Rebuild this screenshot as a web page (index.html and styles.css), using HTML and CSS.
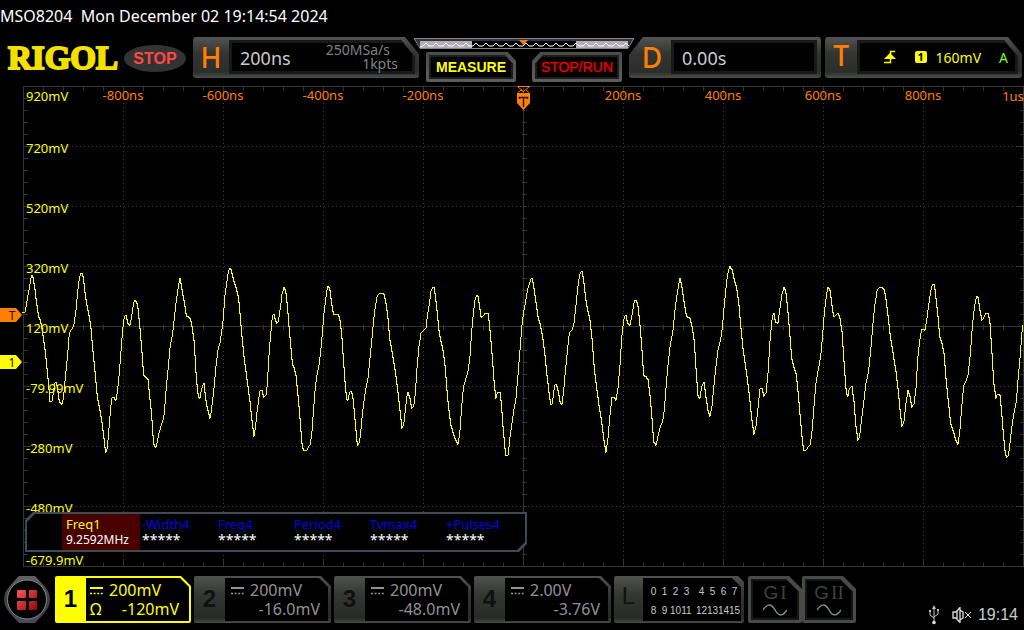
FILE: index.html
```html
<!DOCTYPE html>
<html lang="en">
<head>
<meta charset="utf-8">
<title>MSO8204</title>
<link rel="stylesheet" href="styles.css">
</head>
<body>
<div class="caption">MSO8204&nbsp; Mon December 02 19:14:54 2024</div>

<header class="topbar">
  <div class="brand">RIGOL</div>
  <div class="run-state">STOP</div>
  <button class="panel panel-h cut-right">
    <span class="letter">H</span>
    <span class="screen"><span class="value">200ns</span><span class="sampling"><span>250MSa/s</span><span class="depth">1kpts</span></span></span>
  </button>
  <div class="middle">
    <svg class="memory" viewBox="0 0 220 12" aria-hidden="true">
      <path d="M0 0H220L215 12H5Z" fill="#000"/>
      <path d="M0 1H220L213 10V3H6V10Z" fill="#34343c"/>
      <path d="M6 3H58V11H6ZM162 3H214V11H162Z" fill="#b4b0b8"/>
      <path class="memory-wave" d="M6 9"/>
      <path d="M0 .5H220M.5 1L6 10.500H214L219.500 1" fill="none" stroke="#85858c"/>
      <path d="M105 2H114L109.500 7Z" fill="#ff8000"/>
    </svg>
    <div class="actions">
      <button class="action measure"><span>MEASURE</span></button>
      <button class="action stoprun"><span>STOP/RUN</span></button>
    </div>
  </div>
  <button class="panel panel-d cut-left">
    <span class="letter">D</span>
    <span class="screen"><span class="value">0.00s</span></span>
  </button>
  <button class="panel panel-t cut-right">
    <span class="letter">T</span>
    <span class="screen trigger">
      <svg class="edge" viewBox="0 0 12 14" aria-hidden="true"><path d="M0 12.500H6.500V1.500H11" fill="none" stroke="#ff0" stroke-width="1.500"/><path d="M0 9L6 3L12 9Z" fill="#ff0"/></svg>
      <span class="source">1</span><span class="level">160mV</span><span class="sweep">A</span>
    </span>
  </button>
</header>

<main class="plot">
  <svg class="graph" viewBox="0 0 1024 482" role="img" aria-label="Channel 1 waveform">
    <g class="grid" id="grid"></g>
    <g class="volts">
      <text x="26" y="15">920mV</text><text x="26" y="67">720mV</text><text x="26" y="127">520mV</text>
      <text x="26" y="187">320mV</text><text x="26" y="247">120mV</text><text x="26" y="307">-79.99mV</text>
      <text x="26" y="367">-280mV</text><text x="26" y="427">-480mV</text><text x="26" y="479">-679.9mV</text>
    </g>
    <g class="times">
      <text x="123" y="14">-800ns</text><text x="223" y="14">-600ns</text><text x="323" y="14">-400ns</text><text x="423" y="14">-200ns</text>
      <text x="623" y="14">200ns</text><text x="723" y="14">400ns</text><text x="823" y="14">600ns</text><text x="923" y="14">800ns</text>
      <text x="1013" y="15">1us</text>
    </g>
    <g transform="translate(0 169) scale(.333333)" class="trace">
      <polyline points="70,172 76,172 82,132 88,100 92,75 95,62 98,62 101,82 104,95 107,122 112,160 116,185 121,196 125,214 130,250 136,290 140,330 145,380 149,425 149,440 156,440 159,420 164,385 168,382 173,400 176,430 180,442 186,448 190,432 195,380 200,330 205,275 208,235 212,228 217,224 222,208 228,165 233,110 238,72 242,57 247,54 251,75 256,120 261,150 267,180 273,220 279,290 287,370 292,425 300,465 307,510 313,560 317,592 320,590 323,568 327,520 332,460 335,430 342,428 348,436 353,405 358,355 363,290 368,225 372,192 377,179 381,192 385,209 390,211 394,190 398,165 401,145 406,136 410,140 414,160 419,210 425,280 431,362 438,366 444,374 449,425 455,480 459,540 462,568 467,580 471,565 476,540 482,518 488,500 493,475 498,410 504,345 510,280 518,235 524,180 530,130 535,95 540,70 544,90 549,120 555,155 559,182 566,186 571,190 576,215 583,265 587,340 592,400 596,428 600,430 604,405 612,385 616,420 620,450 626,475 630,490 634,470 638,435 643,390 648,335 654,285 660,265 665,230 670,190 674,130 680,85 685,50 690,40 694,45 698,65 704,85 710,105 716,130 720,175 726,245 732,305 738,350 744,395 750,440"/>
      <polyline transform="translate(750 0)" points="0,440 5,490 12,544 16,522 20,480 26,435 30,408 36,407 42,427 48,420 52,390 56,315 61,250 66,195 71,173 76,195 80,206 85,203 88,180 92,155 96,118 102,98 107,108 112,150 117,215 122,270 127,325 133,340 138,360 143,410 148,465 152,515 155,560 160,585 172,585 176,575 181,570 186,530 191,460 196,395 202,355 208,325 214,270 219,210 223,165 229,120 233,95 239,100 243,130 249,170 251,178 265,178 270,195 275,235 280,310 285,380 289,425 293,442 298,415 303,409 308,420 312,460 317,515 322,572 326,570 331,545 335,500 341,445 348,400 354,370 360,310 366,250 371,195 376,155 382,122 388,116 402,117 408,145 414,190 419,250 426,290 433,330 440,380 446,430 452,485 456,520 461,510 466,465 470,430 474,412 480,430 485,460 491,458 496,415 501,340 507,275 513,235 520,228 528,220 532,185 538,150 543,110 548,98 553,98 557,130 562,175 568,235 573,260 580,290 586,340 592,420 598,475 603,510 610,535 617,555 624,568 629,540 634,470 640,400 648,370 654,350 660,305 665,230 670,175 675,135 680,121 684,125 688,150 694,190 700,185 706,175 714,175 718,205 723,260 728,320 733,390 738,430 743,412 750,412"/>
      <polyline transform="translate(1500 0)" points="0,412 4,445 9,515 14,570 17,600 25,600 29,555 34,520 41,470 48,430 54,360 60,285 65,220 71,170 77,140 83,105 89,85 95,68 98,75 103,108 109,150 114,185 121,210 128,245 135,300 142,370 148,420 152,448 157,448 161,412 165,392 169,386 174,405 180,440 186,448 191,410 196,350 202,290 208,235 217,226 222,205 228,150 233,100 239,60 246,49 251,75 257,130 263,165 270,195 276,250 283,340 290,400 297,450 305,500 311,550 318,592 324,550 330,480 336,428 343,428 348,436 354,400 360,330 365,250 371,195 377,178 383,205 390,212 396,180 402,145 407,133 413,145 419,200 425,270 431,362 438,364 444,374 450,420 456,490 461,560 468,572 474,545 481,518 488,500 493,465 498,400 504,330 511,270 518,235 524,175 531,120 536,90 540,70 545,90 550,125 556,165 560,185 570,190 577,220 583,260 588,340 594,422 600,430 605,395 612,382 617,420 624,465 630,485 636,455 642,390 648,335 654,285 661,260 667,220 673,150 680,80 685,48 690,35 697,45 703,75 710,100 716,140 722,210 729,280 736,330 743,380 750,438"/>
      <polyline transform="translate(2250 0)" points="0,438 5,490 12,538 18,515 24,460 30,402 36,400 42,424 48,415 54,355 60,260 66,195 71,170 76,200 84,205 90,160 96,118 102,98 107,108 112,150 118,220 125,310 133,340 139,360 145,420 152,500 158,565 161,586 170,586 175,575 181,570 187,520 193,440 198,385 205,345 212,305 218,240 223,175 229,125 234,97 240,105 246,150 251,185 259,182 264,175 270,190 276,230 282,320 288,400 293,430 298,402 306,395 312,440 318,515 324,555 329,545 334,500 341,445 348,385 355,355 362,290 368,215 374,155 381,110 387,99 396,98 403,104 409,140 415,190 421,245 430,300 438,350 445,410 451,475 456,514 462,500 468,445 474,407 480,425 486,457 492,448 498,400 503,315 509,260 515,224 525,225 531,190 537,145 543,105 548,88 553,88 558,130 564,185 569,245 575,262 582,295 588,370 595,440 602,505 610,530 617,553 624,568 629,535 635,460 641,395 648,380 654,362 661,300 667,215 673,160 680,124 684,126 690,165 696,195 701,190 707,176 715,176 720,205 725,280 731,380 738,430 743,418 750,420 755,470 760,535 765,585 769,607 775,605 779,575 785,520 792,475 799,440 804,375 811,300 815,240 819,210"/>
    </g>
    <g class="markers">
      <path d="M0 222H16L22 229L16 236H0Z" fill="#ff8000"/>
      <text x="12" y="234">T</text>
      <path d="M0 269H16L22 276L16 283H0Z" fill="#ff0"/>
      <text x="12" y="281">1</text>
      <path d="M517.500 .5H529.500L523.500 5.500ZM518 6.500L521 4L524 6M526 4L529 6.500" fill="none" stroke="#ff8000"/>
      <path d="M517 7H530V17L523.500 24L517 17Z" fill="#ff8000"/>
      <path d="M519.500 13V11.500H527.500V13M523.500 11.500V21" fill="none" stroke="#2a1800" stroke-width="1.500"/>
    </g>
  </svg>
  <section class="measures">
    <div class="measures-inner">
      <div class="item active"><b>Freq1</b><span>9.2592MHz</span></div>
      <div class="item"><b>-Width4</b><span>*****</span></div>
      <div class="item"><b>Freq4</b><span>*****</span></div>
      <div class="item"><b>Period4</b><span>*****</span></div>
      <div class="item"><b>Tvmax4</b><span>*****</span></div>
      <div class="item"><b>+Pulses4</b><span>*****</span></div>
    </div>
  </section>
</main>

<footer class="bottombar">
  <button class="menu" aria-label="Menu">
    <svg viewBox="0 0 46 47" aria-hidden="true">
      <defs>
        <linearGradient id="ring" x1="0" y1="0" x2="0" y2="1"><stop offset="0" stop-color="#626262"/><stop offset=".5" stop-color="#3c3d40"/><stop offset="1" stop-color="#4a4b5a"/></linearGradient>
        <linearGradient id="red" gradientUnits="userSpaceOnUse" x1="13" y1="14" x2="33" y2="34"><stop offset="0" stop-color="#ff5555"/><stop offset="1" stop-color="#900808"/></linearGradient>
      </defs>
      <path d="M15 0H31Q36 5 41 11Q46 17 46 23.500Q46 30 41 36Q36 42 31 47H15Q10 42 5 36Q0 30 0 23.500Q0 17 5 11Q10 5 15 0Z" fill="url(#ring)"/>
      <circle cx="23" cy="23.500" r="19.500" fill="#000" stroke="#85878c"/>
      <g fill="url(#red)"><rect x="13" y="14" width="9" height="8" rx="1"/><rect x="25" y="14" width="8" height="8" rx="1"/><rect x="13" y="25" width="9" height="9" rx="1"/><rect x="25" y="25" width="8" height="9" rx="1"/></g>
    </svg>
  </button>
  <button class="channel on">
    <span class="number">1</span>
    <span class="readout">
      <span class="line"><svg class="dc" viewBox="0 0 13 8"><path d="M0 1H13" stroke-width="2"/><path d="M0 6.500H13" stroke-dasharray="2 1.600" stroke-width="1.500"/></svg>200mV</span>
      <span class="line offset"><span class="ohm">Ω</span>-120mV</span>
    </span>
  </button>
  <button class="channel">
    <span class="number">2</span>
    <span class="readout">
      <span class="line"><svg class="dc" viewBox="0 0 13 8"><path d="M0 1H13" stroke-width="2"/><path d="M0 6.500H13" stroke-dasharray="2 1.600" stroke-width="1.500"/></svg>200mV</span>
      <span class="line offset">-16.0mV</span>
    </span>
  </button>
  <button class="channel">
    <span class="number">3</span>
    <span class="readout">
      <span class="line"><svg class="dc" viewBox="0 0 13 8"><path d="M0 1H13" stroke-width="2"/><path d="M0 6.500H13" stroke-dasharray="2 1.600" stroke-width="1.500"/></svg>200mV</span>
      <span class="line offset">-48.0mV</span>
    </span>
  </button>
  <button class="channel">
    <span class="number">4</span>
    <span class="readout">
      <span class="line"><svg class="dc" viewBox="0 0 13 8"><path d="M0 1H13" stroke-width="2"/><path d="M0 6.500H13" stroke-dasharray="2 1.600" stroke-width="1.500"/></svg>2.00V</span>
      <span class="line offset">-3.76V</span>
    </span>
  </button>
  <button class="channel logic">
    <span class="number">L</span>
    <span class="readout bits">
      <span>0</span><span>1</span><span>2</span><span>3</span><i></i><span>4</span><span>5</span><span>6</span><span>7</span>
      <span>8</span><span>9</span><span>10</span><span>11</span><i></i><span>12</span><span>13</span><span>14</span><span>15</span>
    </span>
  </button>
  <div class="generators">
    <button class="generator"><span class="face"><span class="name">G<span class="roman">I</span></span><svg class="sine" viewBox="0 0 24 12"><path d="M0 6C4 0 8 -1 12 6S20 12 24 6"/></svg></span></button>
    <button class="generator"><span class="face"><span class="name">G<span class="roman">II</span></span><svg class="sine" viewBox="0 0 24 12"><path d="M0 6C4 0 8 -1 12 6S20 12 24 6"/></svg></span></button>
  </div>
  <div class="status">
    <svg class="usb" viewBox="0 0 10 20" aria-label="USB"><path d="M5 2V17M1 6V10L5 13M9 5V9L5 12" fill="none" stroke="#c4c4c4"/><path d="M5 0L7 4H3Z" fill="#c4c4c4"/><path d="M0 5H2V7H0ZM8 4H10V6H8Z" fill="#c4c4c4"/><circle cx="5" cy="17.500" r="1.800" fill="#ddd"/></svg>
    <svg class="speaker" viewBox="0 0 20 16" aria-label="Muted"><path d="M1 5H4L8 .5V15.500L4 11H1ZM5 4V12M8 3L11 5V11L8 13M8 6V10" fill="none" stroke="#ddd" stroke-width="1.300"/><path d="M13 5L19 11M19 5L13 11" stroke="#ddd"/></svg>
    <span class="clock">19:14</span>
  </div>
</footer>
<script src="grid.js"></script>
</body>
</html>
```
FILE: styles.css
```css
* { box-sizing: border-box; }

body {
  margin: 0;
  min-height: 100vh;
  background: #000;
  color: #ccc;
  font-family: "Noto Sans", "Open Sans", sans-serif;
}

button {
  margin: 0;
  padding: 0;
  border: 0;
  background: none;
  color: inherit;
  font: inherit;
  text-align: left;
}

svg { display: block; }

.caption {
  padding: 4px 0 9px;
  color: #fff;
  font-size: 16px;
  line-height: 24px;
}

/* Top bar */
.topbar {
  display: flex;
  align-items: flex-start;
  height: 49px;
  padding: 0 2px 0 8px;
}

.brand {
  flex: none;
  width: 116px;
  color: #f2e000;
  font-family: "Liberation Serif", serif;
  font-size: 33px;
  font-weight: bold;
  line-height: 43px;
  -webkit-text-stroke: 2px #f2e000;
}

.run-state {
  flex: none;
  width: 62px;
  height: 27px;
  margin: 8px 7px 0 0;
  border-radius: 50%;
  background: #333;
  color: #ff4848;
  font: bold 16px/28px "Liberation Sans", sans-serif;
  text-align: center;
}

.panel {
  display: flex;
  height: 41px;
  padding: 3px 4px 4px 0;
  border-radius: 3px;
  background: linear-gradient(#525452, #333533 40%, #2c2e2c 85%, #4c4e4c);
}

.panel-h { flex: 1 1 226px; }
.panel-d { flex: 1 1 192px; }
.panel-t { flex: 1 1 197px; margin-left: 4px; }

.cut-right,
.cut-right .screen {
  clip-path: polygon(0 0, calc(100% - 14px) 0, 100% 17px, 100% 100%, 0 100%);
}

.cut-left { clip-path: polygon(14px 0, 100% 0, 100% 100%, 0 100%, 0 18px); }

.letter {
  flex: none;
  width: 36px;
  color: #ff8000;
  font-size: 28px;
  font-weight: 500;
  line-height: 35px;
  text-align: center;
}

.panel-d .letter { width: 42px; padding-left: 4px; }
.panel-t .letter { width: 32px; line-height: 31px; }

.screen {
  display: flex;
  flex: 1;
  align-items: center;
  justify-content: space-between;
  border: 3px solid #181a19;
  background: #000;
  padding: 0 14px 0 8px;
}

.value { font-size: 18px; line-height: 26px; padding-top: 2px; }

.sampling {
  display: flex;
  flex-direction: column;
  align-items: flex-end;
  color: #808080;
  font-size: 14px;
  line-height: 14px;
}

.sampling span:first-child { margin-right: 8px; }

.trigger {
  justify-content: flex-end;
  padding-right: 7px;
  color: #ff0;
  font-size: 14px;
}

.edge { width: 12px; height: 14px; margin-right: 19px; }

.source {
  width: 12px;
  height: 12px;
  margin-right: 9px;
  border-radius: 2px;
  background: #ff0;
  color: #000;
  font-size: 11px;
  font-weight: bold;
  line-height: 12px;
  text-align: center;
}

.sweep { margin-left: 18px; color: #80ff20; }

.middle {
  position: relative;
  flex: 1 1 210px;
  padding: 15px 7px 0;
}

.memory {
  position: absolute;
  z-index: 1;
  top: 1px;
  left: 50%;
  width: 220px;
  height: 12px;
  transform: translateX(-50%);
}

.memory-wave { fill: none; stroke: #fff; }

.actions { display: flex; justify-content: space-between; gap: 16px; }

.action {
  flex: 1;
  height: 30px;
  padding: 3px;
  border-radius: 2px;
  background: linear-gradient(#4a4c4a, #5c5e5c);
}

.action span {
  display: block;
  height: 24px;
  border: 2px solid #1c1e1d;
  background: #000;
  font: 14px/20px "Liberation Sans", sans-serif;
  text-align: center;
  white-space: nowrap;
}

.measure span { color: #ff0; font-weight: bold; }
.stoprun span { color: #f00000; text-shadow: 0 0 2px #a00000; }

.measure,
.measure span { clip-path: polygon(0 0, calc(100% - 8px) 0, 100% 9px, 100% 100%, 0 100%); }

.stoprun,
.stoprun span { clip-path: polygon(8px 0, 100% 0, 100% 100%, 0 100%, 0 9px); }

/* Plot */
.plot { position: relative; }
.graph { width: 100%; height: auto; }
.grid { fill: none; stroke: #343434; shape-rendering: crispEdges; }
.grid .dots { stroke: #444; stroke-dasharray: 1 3; }
.volts { fill: #ff0; font-size: 13px; }
.times { fill: #ff8000; font-size: 13px; text-anchor: middle; }

.trace {
  fill: none;
  stroke: #ff0;
  stroke-width: 3;
  shape-rendering: crispEdges;
}

.markers text { fill: #201000; font-size: 12px; text-anchor: middle; }

.measures {
  position: absolute;
  bottom: 16px;
  left: 25px;
  padding: 2px;
  background: #3c4c52;
}

.measures-inner {
  display: flex;
  height: 36px;
  padding: 0 5px 0 35px;
  background: #000;
}

.measures,
.measures-inner {
  clip-path: polygon(8px 0, 100% 0, 100% calc(100% - 8px), calc(100% - 8px) 100%, 0 100%, 0 8px);
}

.item {
  display: flex;
  flex-direction: column;
  width: 76px;
  color: #fff;
  font-size: 12px;
  line-height: 16px;
  padding: 2px 0 0 2px;
}

.item b { color: #0000e8; font-size: 13px; font-weight: normal; }
.item span { white-space: nowrap; }
.item:not(.active) span { font-size: 14px; }

.active {
  width: 78px;
  padding-left: 4px;
  background: #480000;
}

.active b { color: #ff0; }

/* Bottom bar */
.bottombar {
  display: flex;
  gap: 3px;
  padding: 8px 6px 0 4px;
}

.menu { flex: none; width: 48px; height: 47px; }
.menu svg { width: 46px; height: 47px; }

.channel {
  display: flex;
  flex: 0 1 137px;
  height: 47px;
  padding: 2px 3px 2px 0;
  border-radius: 2px;
  background: linear-gradient(#50524f, #343634 40%, #282a28 90%, #4a4c4a);
  color: #929292;
  clip-path: polygon(0 0, calc(100% - 10px) 0, 100% 10px, 100% 100%, 0 100%);
}

.channel.on { flex-basis: 136px; background: #ff0; color: #ff0; padding-right: 2px; }
.channel.logic { flex-basis: 130px; clip-path: polygon(0 0, calc(100% - 6px) 0, 100% 6px, 100% 100%, 0 100%); }

.number {
  flex: none;
  width: 31px;
  color: #101110;
  font: bold 24px/42px "Liberation Sans", sans-serif;
  text-align: center;
}

.on .number { color: #000; }
.logic .number { width: 29px; font-weight: normal; line-height: 36px; }

.readout {
  display: flex;
  flex: 1;
  flex-direction: column;
  padding: 3px 8px 0 6px;
  background: #000;
  clip-path: polygon(0 0, calc(100% - 9px) 0, 100% 9px, 100% 100%, 0 100%);
}

.line { display: flex; align-items: center; font-size: 16px; line-height: 19px; }
.offset { justify-content: flex-end; }
.on .readout { padding: 3px 10px 0 4px; }
.ohm { margin-right: auto; }
.dc { width: 13px; height: 8px; margin-right: 6px; fill: none; stroke: currentColor; }

.readout.bits {
  display: grid;
  grid-template-columns: repeat(4, 11px) 4px repeat(4, 11px);
  justify-content: center;
  padding: 5px 0 0 4px;
  color: #c8c8c8;
  font: 10px/17px "Liberation Sans", sans-serif;
  text-align: center;
}

.bits span { display: flex; justify-content: center; }

.generators { display: flex; margin-left: 1px; }

.generator {
  width: 54px;
  height: 47px;
  padding: 3px;
  border-radius: 2px;
  background: #484a48;
}

.generator,
.face { clip-path: polygon(0 0, calc(100% - 13px) 0, 100% 13px, 100% 100%, 0 100%); }

.face {
  display: flex;
  flex-direction: column;
  align-items: center;
  height: 41px;
  border: 2px solid #151716;
  background: #000;
}

.name {
  display: flex;
  align-items: center;
  gap: 2px;
  color: #404040;
  font: 19px/23px "Liberation Sans", sans-serif;
}

.roman { font-family: "Liberation Serif", serif; }
.sine { width: 24px; height: 12px; fill: none; stroke: #8c8c8c; stroke-width: 1.5; }

.status {
  display: flex;
  align-items: center;
  align-self: flex-end;
  margin: 29px 0 0 auto;
  height: 20px;
}

.usb { width: 10px; height: 20px; margin-right: 13px; }
.speaker { width: 20px; height: 16px; margin-right: 6px; }
.clock { color: #ccc; font: 16px/20px "Liberation Sans", sans-serif; }
```
FILE: grid.js
```js
// Graticule: ten by eight divisions, five minor ticks per division.
const left = 23.5, right = 1023.5, top_ = 0.5, bottom = 480.5;
const midX = 523.5, midY = 240.5;
let dots = "";
let lines = `M${left} ${top_}H${right}V${bottom}H${left}ZM${midX} ${top_}V${bottom}M${left} ${midY}H${right}`;
for (let i = 1; i < 10; i++) dots += `M${left + i * 100} ${top_}V${bottom}`;
for (let i = 1; i < 8; i++) dots += `M${left} ${top_ + i * 60}H${right}`;
for (let i = 1; i < 50; i++) {
  const x = left + i * 20, n = i % 5 ? 4 : 7;
  lines += `M${x} ${top_}v${n}M${x} ${bottom}v${-n}M${x} ${midY - 2}v5`;
}
for (let i = 1; i < 40; i++) {
  const y = top_ + i * 12, n = i % 5 ? 4 : 7;
  lines += `M${left} ${y}h${n}M${right} ${y}h${-n}M${midX - 2} ${y}h5`;
}
document.getElementById("grid").innerHTML = `<path class="dots" d="${dots}"/><path d="${lines}"/>`;

// Sample-and-hold rendering of the trace, one sample per display column.
const STEP = 3;
document.querySelectorAll(".trace polyline").forEach((line) => {
  const pts = line.getAttribute("points").trim().split(/\s+/).map((p) => p.split(",").map(Number));
  const end = pts[pts.length - 1][0];
  const out = [];
  let k = 0;
  let previous = null;
  for (let x = Math.floor(pts[0][0] / STEP) * STEP; x <= end; x += STEP) {
    while (k < pts.length - 2 && pts[k + 1][0] < x) k++;
    const [x0, y0] = pts[k];
    const [x1, y1] = pts[k + 1];
    const t = x1 === x0 ? 1 : Math.min(1, Math.max(0, (x - x0) / (x1 - x0)));
    const y = Math.floor((y0 + t * (y1 - y0)) / STEP) * STEP + STEP / 2;
    if (previous !== null) out.push(`${x - STEP / 2},${previous}`);
    out.push(`${x - STEP / 2},${y}`);
    previous = y;
  }
  line.setAttribute("points", out.join(" "));
});

// Miniature waveform in the memory strip.
let wave = "M6 9";
for (let x = 6; x < 210; x += 10) wave += `L${x + 3} 8L${x + 6} 5L${x + 9} 8`;
document.querySelector(".memory-wave").setAttribute("d", wave);
```
